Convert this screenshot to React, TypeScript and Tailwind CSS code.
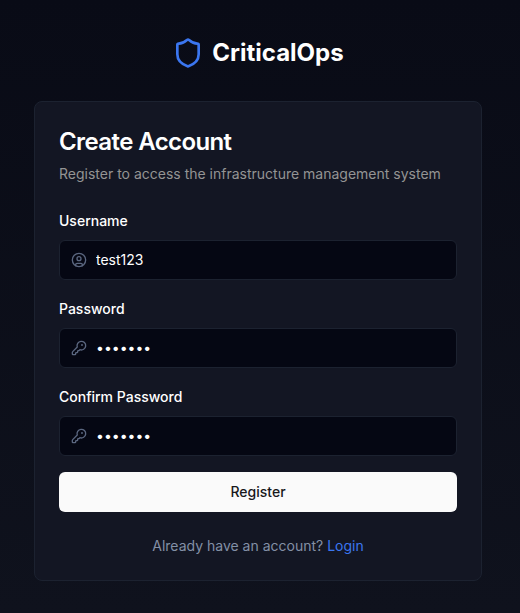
import { CircleUser, KeyRound, Shield } from "lucide-react";
import type { ReactNode } from "react";

type FieldProps = {
  id: string;
  label: string;
  type: string;
  value: string;
  icon: ReactNode;
};

function Field({ id, label, type, value, icon }: FieldProps) {
  return (
    <div className="flex flex-col gap-2">
      <label htmlFor={id} className="h-6 pt-[3px] text-sm font-medium text-white">
        {label}
      </label>
      <div className="flex h-10 items-center gap-[9px] rounded-md border border-[#1c2230] bg-[#050713] px-[11px] text-[#5b6780]">
        {icon}
        <input
          id={id}
          type={type}
          defaultValue={value}
          className="h-full min-w-0 flex-1 bg-transparent pb-0.5 text-sm text-white outline-none"
        />
      </div>
    </div>
  );
}

export default function App() {
  return (
    <main className="flex min-h-screen flex-col items-center bg-gradient-to-b from-[#090b16] to-[#0f121d] pt-[37px] font-['Inter',sans-serif] antialiased">
      <header className="mr-1 mb-8 flex h-8 items-center gap-2">
        <Shield className="size-8 text-[#3b76f0]" />
        <h1 className="text-2xl font-bold text-white">CriticalOps</h1>
      </header>
      <section className="mr-1 w-[448px] rounded-lg border border-[#1c2230] bg-[#131623] p-6">
        <h2 className="text-2xl font-semibold tracking-tight text-white">Create Account</h2>
        <p className="mt-1.5 text-sm text-[#949494]">
          Register to access the infrastructure management system
        </p>
        <form className="mt-6 flex flex-col gap-4" onSubmit={(e) => e.preventDefault()}>
          <Field id="username" label="Username" type="text" value="test123" icon={<CircleUser className="size-4" />} />
          <Field id="password" label="Password" type="password" value="test123" icon={<KeyRound className="size-4" />} />
          <Field id="confirm" label="Confirm Password" type="password" value="test123" icon={<KeyRound className="size-4" />} />
          <button type="submit" className="h-10 rounded-md bg-[#fafafa] text-sm font-medium text-[#18181b]">
            Register
          </button>
        </form>
        <p className="mt-6 text-center text-sm text-[#8390a6]">
          Already have an account? <a href="#login" className="text-[#3b76f0]">Login</a>
        </p>
      </section>
    </main>
  );
}
